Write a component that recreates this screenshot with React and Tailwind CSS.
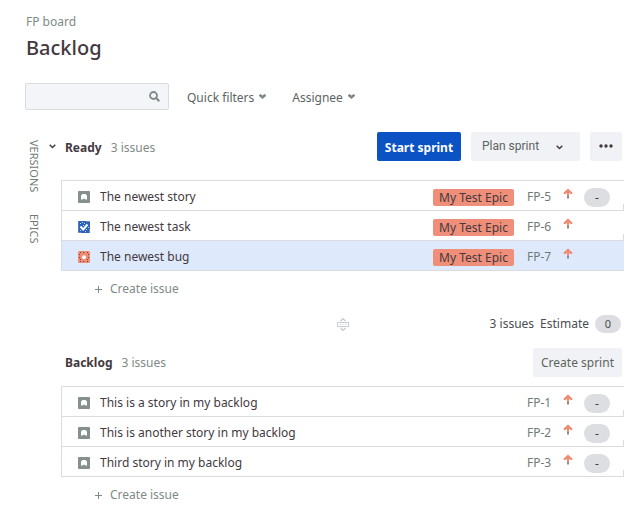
import React from "react";

const sprintIssues = [
  { key: "FP-5", title: "The newest story", type: "story", epic: "My Test Epic", estimate: "-" },
  { key: "FP-6", title: "The newest task", type: "task", epic: "My Test Epic" },
  { key: "FP-7", title: "The newest bug", type: "bug", epic: "My Test Epic", selected: true },
];

const backlogIssues = [
  { key: "FP-1", title: "This is a story in my backlog", type: "story", estimate: "-" },
  { key: "FP-2", title: "This is another story in my backlog", type: "story", estimate: "-" },
  { key: "FP-3", title: "Third story in my backlog", type: "story", estimate: "-" },
];

function TypeIcon({ type }) {
  if (type === "task") {
    return (
      <svg className="size-3 shrink-0" viewBox="0 0 12 12" role="img" aria-label="Task">
        <rect width="12" height="12" rx="1" fill="#2a63bd" />
        <path d="M0 1v10M1 11.500h2M8 0.500h3M11.500 8v3" stroke="#86918d" strokeWidth="1" />
        <path d="M2.500 5.500l2.700 3L9.500 3.500" fill="none" stroke="#fff" strokeWidth="2" />
        <path d="M2 2.500h1M4 1.500h1M6 2.500h1M5 4.500h1M8 8.500h1M7 10.500h1M2 9.500h1M10 6.500h1" stroke="#c3d5ee" strokeWidth="1" />
      </svg>
    );
  }
  if (type === "bug") {
    return (
      <svg className="size-3 shrink-0" viewBox="0 0 12 12" role="img" aria-label="Bug">
        <rect width="12" height="12" rx="1.5" fill="#f08b73" />
        <path
          d="M2 1.500h1M5 1.500h1M9 1.500h1M1 3.500h1M10 3.500h1M1 6.500h1M10 6.500h1M2 8.500h1M9 8.500h1M2 10.500h1M5 10.500h1M9 10.500h1"
          stroke="#6b4a48"
          strokeWidth="1"
        />
        <circle cx="6" cy="6.3" r="2" fill="#fff" />
      </svg>
    );
  }
  return (
    <svg className="size-3 shrink-0" viewBox="0 0 12 12" role="img" aria-label="Story">
      <rect width="12" height="12" rx="1" fill="#86918d" />
      <path d="M3 8.500V4.500L4.500 3h3L9 4.500V8.500H7.500L6 7.500L4.500 8.500z" fill="#fff" />
    </svg>
  );
}

function PriorityArrow() {
  return (
    <svg className="h-3 w-[10px] shrink-0" viewBox="0 0 10 12" role="img" aria-label="High priority">
      <path d="M5 0.500L9.300 4.500V6H7.500L6 4.800V8H4V4.800L2.500 6H0.700V4.500z" fill="#f08b73" />
      <path d="M4 8h2v2.500H4z" fill="#8d8c86" />
    </svg>
  );
}

function FilterArrow() {
  return (
    <svg className="h-[5px] w-[7px]" viewBox="0 0 7 5" aria-hidden="true">
      <path d="M0 1L1.500 0L3.500 1.500L5.500 0L7 1V2L3.500 5L0 2z" fill="#7f8a86" />
    </svg>
  );
}

function Chevron() {
  return (
    <svg className="h-[5px] w-[7px]" viewBox="0 0 7 5" aria-hidden="true">
      <path d="M0.700 0.800L3.500 3.500L6.300 0.800" fill="none" stroke="currentColor" strokeWidth="1.500" />
    </svg>
  );
}

function Issue({ issue }) {
  return (
    <li
      className={`flex h-[30px] items-center border-b border-[#dadcdf] pt-[3px] pl-4 ${
        issue.selected ? "bg-[#dfe9fc]" : "bg-white"
      }`}
    >
      <TypeIcon type={issue.type} />
      <span className="ml-[10px] min-w-0 flex-1 truncate text-[#43393f]">{issue.title}</span>
      {issue.epic && (
        <span className="h-[17px] w-[81px] shrink-0 rounded-[2px] bg-[#f08f79] text-center leading-[17px] text-[#43393f]">
          {issue.epic}
        </span>
      )}
      <span className="ml-[13px] w-[28px] shrink-0 whitespace-nowrap text-[#6f7b77]">{issue.key}</span>
      <span className="mb-[6px] ml-2 flex">
        <PriorityArrow />
      </span>
      <span className="ml-[11px] flex w-[26px] shrink-0">
        {issue.estimate && (
          <span className="h-[19px] w-full rounded-full bg-[#dcdee1] text-center leading-[19px] text-[#43393f]">
            {issue.estimate}
          </span>
        )}
      </span>
      <span className={`ml-[13px] h-[6px] w-px self-end ${issue.selected ? "" : "bg-[#dadcdf]"}`} />
    </li>
  );
}

function IssueList({ issues, label }) {
  return (
    <ul aria-label={label} className="border-t border-l border-[#dadcdf]">
      {issues.map((issue) => (
        <Issue key={issue.key} issue={issue} />
      ))}
    </ul>
  );
}

function CreateIssue() {
  return (
    <button type="button" className="ml-[34px] flex h-9 items-center gap-2 text-[#7f8a86]">
      <svg className="size-[7px]" viewBox="0 0 7 7" aria-hidden="true">
        <path d="M3.500 0v7M0 3.500h7" stroke="currentColor" />
      </svg>
      Create issue
    </button>
  );
}

export default function App() {
  return (
    <main className="min-h-screen bg-white pt-[13px] pr-4 pl-[26px] font-['Noto_Sans','Open_Sans',sans-serif] text-[12px] leading-[18px] text-[#4b4d50]">
      <p className="text-[#7f8a86]">FP board</p>
      <h1 className="mt-1 text-[20px] leading-[26px] font-medium text-[#43393f]">Backlog</h1>

      <div className="mt-[22px] -ml-px flex h-[27px] items-center">
        <label className="flex h-[27px] w-36 items-center rounded-[2px] border border-[#dadcdf] bg-[#f3f5f8] pr-2">
          <input type="search" aria-label="Search backlog" className="h-full min-w-0 flex-1 bg-transparent px-2 outline-none" />
          <svg className="size-[11px]" viewBox="0 0 11 11" aria-hidden="true">
            <circle cx="4.500" cy="4.500" r="3.500" fill="none" stroke="#7f8a86" strokeWidth="1.800" />
            <path d="M7 7l3.300 3.300" stroke="#7f8a86" strokeWidth="2" />
          </svg>
        </label>
        <button type="button" className="ml-[18px] flex items-center gap-[5px] text-[#5c6461]">
          <span className="pt-[2px]">Quick filters</span>
          <FilterArrow />
        </button>
        <button type="button" className="ml-[26px] flex items-center gap-[5px] text-[#5c6461]">
          <span className="pt-[2px]">Assignee</span>
          <FilterArrow />
        </button>
      </div>

      <div className="mt-[21px] flex">
        <nav className="flex w-4 shrink-0 flex-col items-end gap-[22px] pt-[9px] text-[11px] leading-[15px] text-[#6f7b77]">
          <button type="button" className="[writing-mode:vertical-rl]">VERSIONS</button>
          <button type="button" className="[writing-mode:vertical-rl]">EPICS</button>
        </nav>

        <div className="ml-[7px] min-w-0 flex-1">
          <section>
            <div className="flex h-[30px] items-center">
              <button type="button" aria-label="Collapse sprint" className="flex w-4 text-[#43393f]">
                <Chevron />
              </button>
              <h2 className="pt-[3px] font-bold text-[#43393f]">Ready</h2>
              <span className="ml-[9px] flex-1 pt-[3px] text-[#7f8a86]">3 issues</span>
              <button type="button" className="h-[29px] w-[84px] rounded-[2px] bg-[#0b52c4] pt-[3px] font-bold text-white">
                Start sprint
              </button>
              <button
                type="button"
                className="ml-[10px] flex h-[29px] w-[109px] items-center justify-between rounded-[2px] bg-[#f1f2f5] pr-[17px] pl-[11px] font-['Roboto','Liberation_Sans',sans-serif] text-[12px] text-[#5c6461]"
              >
                Plan sprint
                <span className="pt-[3px] text-[#43393f]">
                  <Chevron />
                </span>
              </button>
              <button
                type="button"
                aria-label="More actions"
                className="mr-[2px] ml-[10px] flex h-[29px] w-8 items-center justify-center rounded-[2px] bg-[#f1f2f5]"
              >
                <svg className="h-[4px] w-[14px]" viewBox="0 0 14 4" fill="#43393f" aria-hidden="true">
                  <circle cx="2" cy="2" r="1.700" />
                  <circle cx="7" cy="2" r="1.700" />
                  <circle cx="12" cy="2" r="1.700" />
                </svg>
              </button>
            </div>
            <div className="mt-[19px] ml-3">
              <IssueList issues={sprintIssues} label="Ready" />
              <CreateIssue />
            </div>
          </section>

          <div className="mt-2 flex h-[18px] items-center pr-[3px]">
            <span className="flex flex-1 justify-center pl-[147px]">
              <svg className="h-[13px] w-3" viewBox="0 0 12 13" aria-label="Resize sprint" role="img">
                <path
                  d="M3.500 3L6 .800 8.500 3M3.500 10L6 12.200 8.500 10"
                  fill="none"
                  stroke="#c9cdd1"
                  strokeWidth="1.500"
                />
                <rect x="0.500" y="4.500" width="11" height="4" fill="#fff" stroke="#c9cdd1" />
                <path d="M3 6.500h1M5.500 6.500h1M8 6.500h1" stroke="#c9cdd1" />
              </svg>
            </span>
            <span>3 issues</span>
            <span className="ml-[6px]">Estimate</span>
            <span className="ml-[6px] w-[26px] rounded-full bg-[#dcdee1] text-center text-[11px]">0</span>
          </div>

          <section className="mt-[14px] ml-3">
            <div className="flex h-[30px] items-center pl-1">
              <h2 className="pt-[2px] font-bold text-[#43393f]">Backlog</h2>
              <span className="ml-[9px] flex-1 pt-[2px] text-[#7f8a86]">3 issues</span>
              <button type="button" className="mr-[2px] h-[29px] w-[89px] rounded-[2px] bg-[#f1f2f5] pt-[2px] text-[#5c6461]">
                Create sprint
              </button>
            </div>
            <div className="mt-[9px]">
              <IssueList issues={backlogIssues} label="Backlog" />
              <CreateIssue />
            </div>
          </section>
        </div>
      </div>
    </main>
  );
}
